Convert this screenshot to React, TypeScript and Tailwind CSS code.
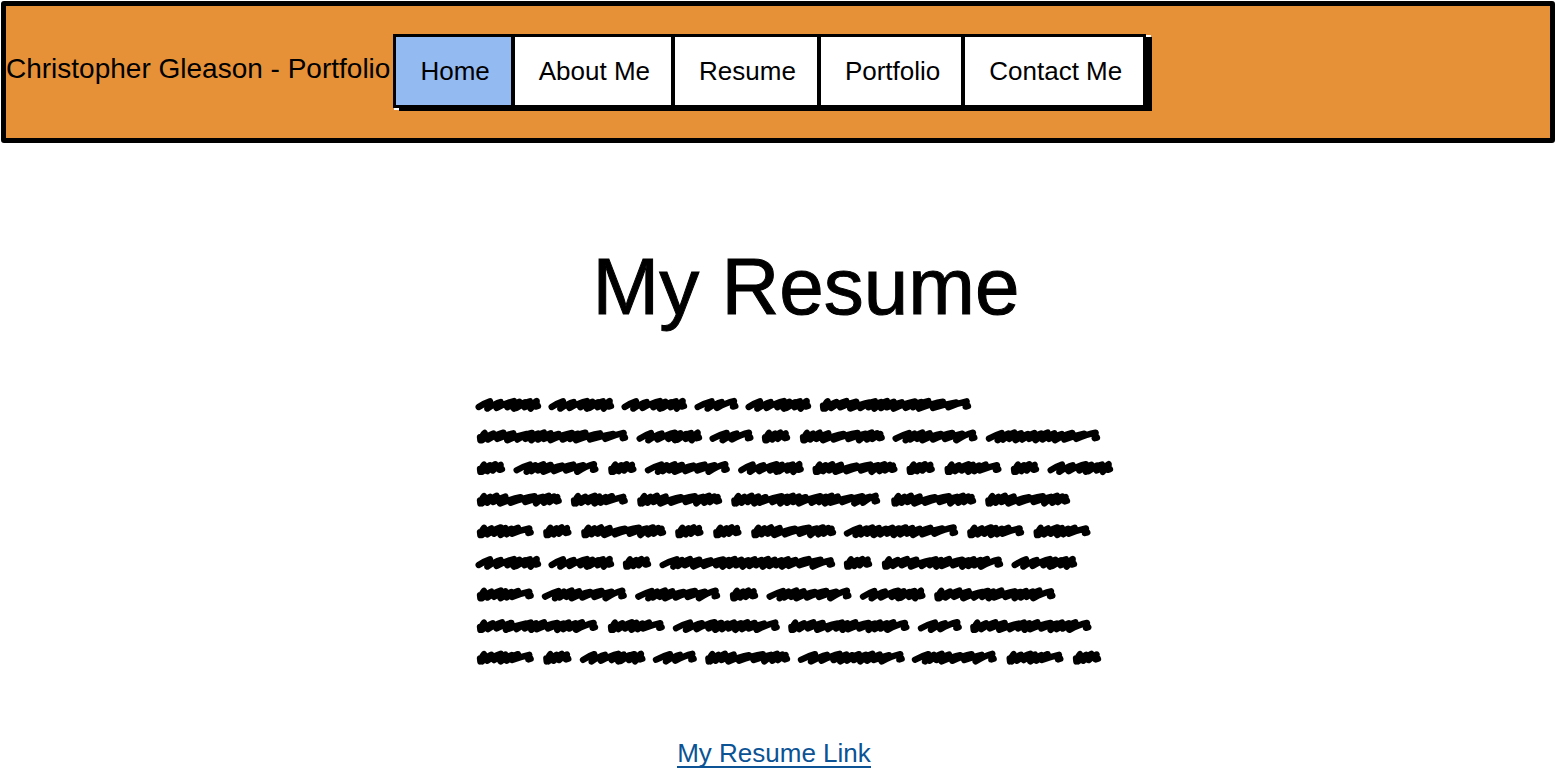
type Word = { advance: number; points: number[]; drop?: boolean };

/* Zigzag turning points of each scribbled word: low, high, low, high, ... */
const words: Record<string, Word> = {
  A: { advance: 219, points: [8, 42, 34, 74, 62, 114, 94, 130, 114, 147, 122, 162, 146, 182, 164, 182] },
  B: { advance: 153, points: [8, 50, 38, 80, 66, 117] },
  C: { advance: 114, drop: true, points: [12, 24, 18, 42, 34, 58, 50, 74] },
  D: { advance: 199, drop: true, points: [12, 24, 18, 46, 34, 74, 54, 88, 74, 106, 92, 126, 108, 160] },
  E: { advance: 282, drop: true, points: [12, 24, 18, 42, 34, 62, 52, 88, 72, 134, 104, 176, 148, 200, 180, 218, 204, 234, 220, 244] },
  F: { advance: 280, points: [8, 48, 38, 64, 52, 88, 72, 110, 88, 144, 120, 178, 156, 208, 190, 240] },
  G: { advance: 483, drop: true, points: [12, 26, 18, 52, 36, 82, 64, 112, 94, 152, 124, 168, 148, 186, 166, 204, 186, 224, 204, 248, 224, 288, 260, 306, 282, 328, 300, 372, 342, 412, 388, 443] },
  L: { advance: 480, drop: true, points: [12, 24, 18, 42, 34, 64, 52, 84, 72, 106, 88, 154, 126, 170, 150, 188, 170, 206, 188, 226, 206, 270, 244, 286, 266, 304, 284, 322, 300, 364, 336, 396, 372, 418, 398, 436] },
  H: { advance: 366, points: [8, 46, 34, 66, 50, 84, 68, 104, 88, 124, 108, 144, 128, 164, 148, 184, 168, 204, 188, 226, 206, 258, 234, 294, 270, 328] },
  I: { advance: 393, drop: true, points: [12, 24, 18, 50, 36, 78, 62, 106, 90, 148, 122, 164, 146, 180, 166, 204, 182, 244, 216, 262, 244, 278, 262, 298, 280, 318, 300, 353] },
  J: { advance: 342, points: [8, 50, 38, 86, 70, 124, 106, 144, 126, 162, 146, 182, 166, 202, 186, 222, 206, 244, 226, 272, 250, 306] },
  K: { advance: 549, points: [8, 50, 40, 66, 54, 90, 74, 118, 100, 152, 132, 190, 168, 206, 188, 224, 208, 244, 228, 264, 248, 284, 268, 304, 288, 324, 308, 344, 328, 364, 348, 384, 366, 406, 386, 446, 418, 482, 458, 512] },
};

const lines = ["AAABAG", "GABCEFH", "CFCFAECDCA", "EDELEE", "DCECCEHDD", "AACKCIA", "DFFCFAI", "IDJIBI", "DCABEJFDC"];

/* Up-strokes lean towards the top; down-strokes drop straight back. */
function wordPath({ points, drop }: Word, x: number, y: number) {
  const start = x + points[0];
  let d = drop ? `M${start},${y + 23} L${start + 1},${y + 32}` : `M${start},${y + 27}`;
  for (let i = 1; i < points.length; i++) {
    const px = x + points[i];
    const from = x + points[i - 1];
    const high = y + 9 + (i % 5);
    const low = y + 28 + (i % 3) * 2;
    d += i % 2 === 1 ? ` Q${from + (px - from) * 0.55},${high + 5} ${px},${high}` : ` L${px},${low}`;
  }
  const last = x + points[points.length - 1];
  return `${d} L${last - 3},${y + 26} L${last + 4},${y + 24}`;
}

function ScribbledText() {
  return (
    <svg
      viewBox="0 0 1914 804"
      className="block h-auto w-full overflow-visible"
      role="img"
      aria-label="Resume text placeholder"
    >
      <g fill="none" stroke="#000" strokeWidth="19" strokeLinejoin="round" strokeLinecap="round">
        {lines.map((line, row) => {
          let x = 3;
          return [...line].map((key, i) => {
            const d = wordPath(words[key], x, row * 94.8);
            x += words[key].advance;
            return <path key={`${row}-${i}`} d={d} />;
          });
        })}
      </g>
    </svg>
  );
}

const tabs = ["Home", "About Me", "Resume", "Portfolio", "Contact Me"];

export default function App() {
  return (
    <div className="min-h-screen bg-white font-['Liberation_Sans',Arial,sans-serif] text-black">
      <div className="px-px pt-px">
        <header className="flex items-start rounded-[3px] border-[5px] border-black bg-[#e69138] pt-7 pb-[30px]">
          <div className="shrink-0 pr-[3px] text-[28px] leading-[70px] whitespace-nowrap">
            Christopher Gleason - Portfolio
          </div>
          <nav
            aria-label="Main"
            className="flex shrink-0 divide-x-4 divide-black border-[3px] border-black bg-white shadow-[6px_3px_0_#000,5px_1px_0_#fff,1px_2px_0_#fff]"
          >
            {tabs.map((tab, i) => (
              <a
                key={tab}
                href="#"
                aria-current={i === 0 ? "page" : undefined}
                className={`pr-[21px] pl-6 text-[26px] leading-[68px] whitespace-nowrap ${i === 0 ? "bg-[#94baf2]" : "bg-white"}`}
              >
                {tab}
              </a>
            ))}
          </nav>
        </header>
      </div>
      <main className="flex flex-col items-center pt-[98px] pl-8">
        <h1 className="ml-6 text-[80px] leading-[92px] [-webkit-text-stroke:1px_#000]">My Resume</h1>
        <div className="mt-[65px] w-full max-w-[638px]">
          <ScribbledText />
        </div>
        <a href="#" className="mt-[74px] mr-10 border-b-2 border-[#0b5394] text-[26px] leading-[26px] text-[#0b5394]">
          My Resume Link
        </a>
      </main>
    </div>
  );
}
